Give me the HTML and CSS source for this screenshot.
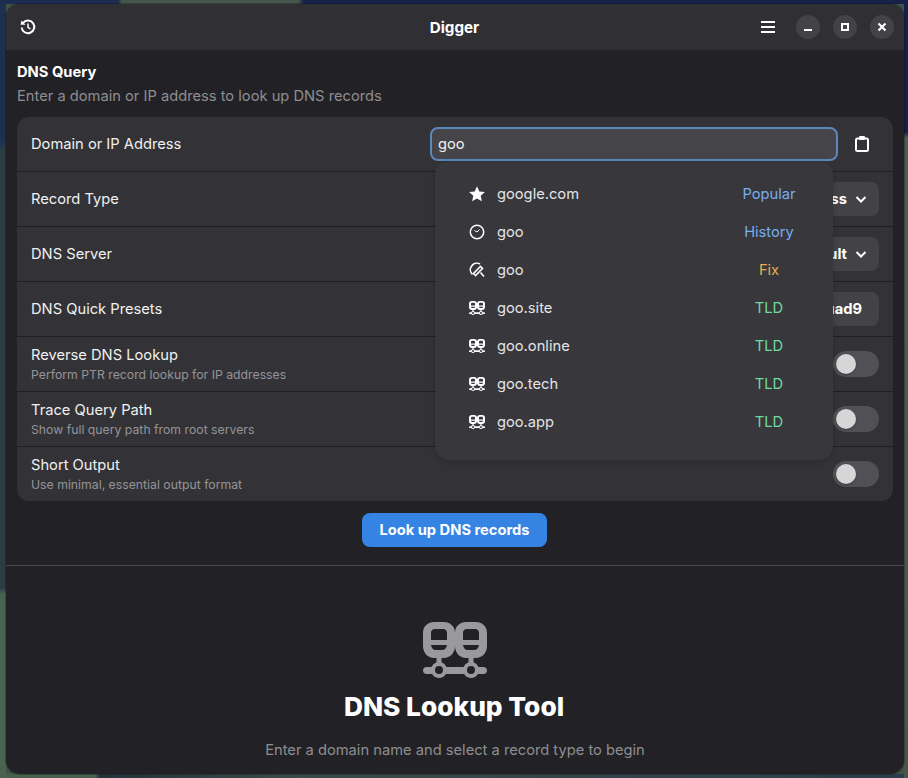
FILE: index.html
```html
<!DOCTYPE html>
<html>
<head>
    <meta charset="UTF-8">
    <meta name="viewport" content="width=device-width, initial-scale=1">
    <title>Digger</title>
    <link rel="stylesheet" href="styles.css">
</head>
<body>
    <svg class="defs" width="0" height="0">
        <symbol id="dns" viewBox="0 0 64 56">
            <path fill-rule="evenodd" d="M11 0H21C27 0 32 4 32 11V24C32 31 27 36 21 36H11C5 36 0 31 0 24V11C0 4 5 0 11 0ZM12 7C9.500 7 8 8.500 8 11V18H24V11C24 8.500 22.500 7 20 7ZM8 23C8.500 26 10 28 13 28H19C22 28 23.500 26 24 23Z"/>
            <path fill-rule="evenodd" d="M43 0H53C59 0 64 4 64 11V24C64 31 59 36 53 36H43C37 36 32 31 32 24V11C32 4 37 0 43 0ZM44 7C41.500 7 40 8.500 40 11V18H56V11C56 8.500 54.500 7 52 7ZM40 23C40.500 26 42 28 45 28H51C54 28 55.500 26 56 23Z"/>
            <path d="M13.500 34H18.500V42H13.500ZM45.500 34H50.500V42H45.500Z"/>
            <path d="M3.500 45H10V52H3.500C1.500 52 0 50.500 0 48.500C0 46.500 1.500 45 3.500 45ZM22 45H42V52H22ZM54 45H60.500C62.500 45 64 46.500 64 48.500C64 50.500 62.500 52 60.500 52H54Z"/>
            <path fill-rule="evenodd" d="M16 40A8 8 0 1 1 16 56A8 8 0 1 1 16 40ZM16 44A4 4 0 1 0 16 52A4 4 0 1 0 16 44Z"/>
            <path fill-rule="evenodd" d="M48 40A8 8 0 1 1 48 56A8 8 0 1 1 48 40ZM48 44A4 4 0 1 0 48 52A4 4 0 1 0 48 44Z"/>
        </symbol>
    </svg>

    <div class="window">
        <header class="headerbar">
            <svg class="icon" viewBox="0 0 16 16" fill="none" stroke="#fff" stroke-width="2">
                <path d="M3 4A6.300 6.300 0 1 1 1.700 8.500"/>
                <path d="M0.500 5.800H5.500L1.500 1.500Z" fill="#fff" stroke="none"/>
                <path d="M8 4.500V8.300L10.500 10" stroke-width="1.500"/>
            </svg>
            <div class="title">Digger</div>
            <div class="header-end">
                <svg class="icon menu-icon" viewBox="0 0 16 16" fill="#fff">
                    <rect x="1" y="2" width="14" height="2"/>
                    <rect x="1" y="7" width="14" height="2"/>
                    <rect x="1" y="12" width="14" height="2"/>
                </svg>
                <button class="win-btn">
                    <svg viewBox="0 0 24 24" fill="#fff"><rect x="8" y="14" width="8" height="2"/></svg>
                </button>
                <button class="win-btn">
                    <svg viewBox="0 0 24 24" fill="none" stroke="#fff" stroke-width="2"><rect x="9" y="9" width="6" height="6"/></svg>
                </button>
                <button class="win-btn">
                    <svg viewBox="0 0 24 24" fill="none" stroke="#fff" stroke-width="2.200"><path d="M8.500 8.500L15.500 15.500M15.500 8.500L8.500 15.500"/></svg>
                </button>
            </div>
        </header>

        <main class="content">
            <div class="query">
                <h2 class="group-title">DNS Query</h2>
                <p class="group-desc">Enter a domain or IP address to look up DNS records</p>

                <div class="list">
                    <div class="row">
                        <div class="row-label">Domain or IP Address</div>
                        <div class="entry">goo</div>
                        <svg class="icon paste" viewBox="0 0 14 16" fill="none" stroke="#fff" stroke-width="2">
                            <rect x="1" y="2.500" width="12" height="12.500" rx="1.500"/>
                            <rect x="4" y="0" width="6" height="4" rx="1" fill="#fff" stroke="none"/>
                        </svg>
                    </div>
                    <div class="row">
                        <div class="row-label">Record Type</div>
                        <div class="combo">A - IPv4 Address
                            <svg class="chevron" viewBox="0 0 16 16" fill="none" stroke="#fff" stroke-width="2"><path d="M3.500 6L8 10.500L12.500 6"/></svg>
                        </div>
                    </div>
                    <div class="row">
                        <div class="row-label">DNS Server</div>
                        <div class="combo">System Default
                            <svg class="chevron" viewBox="0 0 16 16" fill="none" stroke="#fff" stroke-width="2"><path d="M3.500 6L8 10.500L12.500 6"/></svg>
                        </div>
                    </div>
                    <div class="row">
                        <div class="row-label">DNS Quick Presets</div>
                        <div class="combo preset">Quad9</div>
                    </div>
                    <div class="row">
                        <div>
                            <div class="row-label">Reverse DNS Lookup</div>
                            <div class="row-sub">Perform PTR record lookup for IP addresses</div>
                        </div>
                        <div class="switch"><span class="knob"></span></div>
                    </div>
                    <div class="row">
                        <div>
                            <div class="row-label">Trace Query Path</div>
                            <div class="row-sub">Show full query path from root servers</div>
                        </div>
                        <div class="switch"><span class="knob"></span></div>
                    </div>
                    <div class="row">
                        <div>
                            <div class="row-label">Short Output</div>
                            <div class="row-sub">Use minimal, essential output format</div>
                        </div>
                        <div class="switch"><span class="knob"></span></div>
                    </div>
                </div>

                <div class="popover">
                    <div class="suggestion">
                        <svg class="icon" viewBox="0 0 16 16" fill="#fff"><path d="M8 0.300L10.300 5.400L15.900 6L11.700 9.700L12.900 15.300L8 12.400L3.100 15.300L4.300 9.700L0.100 6L5.700 5.400Z"/></svg>
                        <span class="sug-text">google.com</span>
                        <span class="tag popular">Popular</span>
                    </div>
                    <div class="suggestion">
                        <svg class="icon" viewBox="0 0 16 16" fill="none" stroke="#fff" stroke-width="1.500"><circle cx="8" cy="8" r="6.700"/><path d="M5.500 6.500L8 8L10.500 5.500" stroke-width="1"/></svg>
                        <span class="sug-text">goo</span>
                        <span class="tag popular">History</span>
                    </div>
                    <div class="suggestion">
                        <svg class="icon" viewBox="0 0 16 16" fill="none" stroke="#fff" stroke-width="1.600"><path d="M11 2A6.500 6.500 0 0 0 3.500 12.500"/><path d="M6.500 13.500L4.500 11.500L11.500 4.500L13.500 6.500Z"/><path d="M11.500 10.500L15 14.500"/></svg>
                        <span class="sug-text">goo</span>
                        <span class="tag fix">Fix</span>
                    </div>
                    <div class="suggestion">
                        <svg class="icon dns-small"><use href="#dns"/></svg>
                        <span class="sug-text">goo.site</span>
                        <span class="tag tld">TLD</span>
                    </div>
                    <div class="suggestion">
                        <svg class="icon dns-small"><use href="#dns"/></svg>
                        <span class="sug-text">goo.online</span>
                        <span class="tag tld">TLD</span>
                    </div>
                    <div class="suggestion">
                        <svg class="icon dns-small"><use href="#dns"/></svg>
                        <span class="sug-text">goo.tech</span>
                        <span class="tag tld">TLD</span>
                    </div>
                    <div class="suggestion">
                        <svg class="icon dns-small"><use href="#dns"/></svg>
                        <span class="sug-text">goo.app</span>
                        <span class="tag tld">TLD</span>
                    </div>
                </div>

                <div class="actions">
                    <button class="lookup">Look up DNS records</button>
                </div>
            </div>

            <section class="status">
                <svg class="status-icon"><use href="#dns"/></svg>
                <h1 class="status-title">DNS Lookup Tool</h1>
                <p class="status-desc">Enter a domain name and select a record type to begin</p>
            </section>
        </main>
    </div>
</body>
</html>
```

FILE: styles.css
```css
* {
    box-sizing: border-box;
}
html, body {
    height: 100%;
}
body {
    margin: 0;
    overflow: hidden;
    padding: 4px 4px 4px 6px;
    background-color: #3d5345;
    background-image:
        linear-gradient(90deg, #1c2b50 0, #1c2b50 118px, #46564a 122px, #46564a 298px, #16224c 304px, #16224c 100%),
        linear-gradient(180deg, #1e3050 0, #1e3050 140px, #2a3d45 150px, #2a3d45 588px, #4a6350 594px, #4a6350 100%),
        linear-gradient(180deg, #141f4a 0, #141f4a 132px, #4d5d54 138px, #46564c 100%),
        linear-gradient(90deg, #46604a 0, #46604a 95px, #26323a 100px, #3a4c48 300px, #2b3d4a 100%);
    background-size: 100% 4px, 6px 100%, 4px 100%, 100% 4px;
    background-position: top left, top left, top right, bottom left;
    background-repeat: no-repeat;
    font-family: Inter, "Noto Sans", sans-serif;
    font-size: 14.700px;
    color: #fff;
}
.defs {
    position: absolute;
}
.icon {
    width: 16px;
    height: 16px;
    flex: none;
}
.window {
    display: flex;
    flex-direction: column;
    height: 770px;
    background-color: #222226;
    border-radius: 14px;
    overflow: hidden;
    box-shadow: 0 0 0 1px rgba(0, 0, 0, 0.25);
}

.headerbar {
    display: grid;
    grid-template-columns: 1fr auto 1fr;
    align-items: center;
    height: 46px;
    flex: none;
    padding: 0 14px;
    background-color: #303034;
}
.title {
    font-weight: 700;
    font-size: 15.200px;
    margin-right: 1px;
}
.header-end {
    display: flex;
    align-items: center;
    justify-content: flex-end;
    gap: 13px;
    margin-right: -4px;
}
.menu-icon {
    margin-right: 7px;
}
.win-btn {
    width: 24px;
    height: 24px;
    padding: 0;
    border: none;
    border-radius: 50%;
    background-color: #434347;
}
.win-btn svg {
    display: block;
    width: 24px;
    height: 24px;
}

.content {
    flex: 1;
    display: flex;
    flex-direction: column;
}
.query {
    position: relative;
    padding: 13px 11px 0 11px;
}
.group-title {
    margin: 0;
    font-size: 14.700px;
    line-height: 18px;
    font-weight: 700;
}
.group-desc {
    margin: 6px 0 0;
    font-size: 14.700px;
    line-height: 18px;
    color: #8e8e90;
}
.list {
    margin-top: 12px;
    background-color: #333337;
    border-radius: 12px;
}
.row {
    display: flex;
    align-items: center;
    justify-content: space-between;
    height: 55px;
    padding: 0 14px;
    border-top: 1px solid #1f1f22;
}
.row:first-child {
    height: 54px;
    border-top: none;
}
.row-label {
    line-height: 18px;
    color: #f0f0f0;
}
.row-sub {
    margin-top: 3px;
    font-size: 12.250px;
    line-height: 15px;
    color: #949496;
}
.entry {
    width: 408px;
    height: 34px;
    margin-left: auto;
    padding-left: 6px;
    line-height: 30px;
    background-color: #454549;
    border: 2px solid #5b87bd;
    border-radius: 8px;
    color: #f0f0f0;
}
.paste {
    margin: 0 10px 0 17px;
    width: 14px;
}
.combo {
    display: flex;
    align-items: center;
    gap: 6px;
    height: 34px;
    padding: 0 10px 1px 16px;
    background-color: #434347;
    border-radius: 8px;
    font-weight: 700;
    font-size: 14.700px;
}
.combo .chevron {
    width: 16px;
    height: 16px;
}
.preset {
    padding-right: 17px;
}
.switch {
    width: 46px;
    height: 26px;
    padding: 3px;
    background-color: #515155;
    border-radius: 13px;
}
.knob {
    display: block;
    width: 20px;
    height: 20px;
    border-radius: 50%;
    background-color: #d6d6d6;
    box-shadow: 0 1px 2px rgba(0, 0, 0, 0.3);
}

.popover {
    position: absolute;
    top: 112px;
    left: 429px;
    width: 398px;
    height: 298px;
    padding: 13px 0 0;
    background-color: #37373c;
    border-radius: 12px 12px 14px 14px;
    box-shadow: 0 2px 6px rgba(0, 0, 0, 0.15);
}
.suggestion {
    position: relative;
    display: flex;
    align-items: center;
    height: 38px;
    padding-left: 34px;
}
.sug-text {
    margin-left: 12px;
    color: #e4e4e6;
}
.tag {
    position: absolute;
    right: 0;
    width: 128px;
    text-align: center;
}
.popular {
    color: #78aeed;
}
.fix {
    color: #e6ad50;
}
.tld {
    color: #6edba0;
}
.dns-small {
    fill: #fff;
    height: 14px;
}

.actions {
    display: flex;
    justify-content: center;
    padding: 12px 1px 18px 0;
}
.lookup {
    width: 185px;
    height: 34px;
    padding: 0;
    border: none;
    border-radius: 8px;
    background-color: #3584e4;
    color: #fff;
    font-family: inherit;
    font-size: 14.700px;
    font-weight: 700;
}

.status {
    flex: 1;
    display: flex;
    flex-direction: column;
    align-items: center;
    padding-top: 56px;
    border-top: 1px solid #4a4a4d;
}
.status-icon {
    width: 64px;
    height: 56px;
    fill: #9a9a9c;
}
.status-title {
    margin: 12px 2px 0 0;
    font-size: 26.300px;
    line-height: 34px;
    font-weight: 800;
}
.status-desc {
    margin: 17px 0 0;
    font-size: 14.700px;
    line-height: 18px;
    color: #8e8e90;
}
```
